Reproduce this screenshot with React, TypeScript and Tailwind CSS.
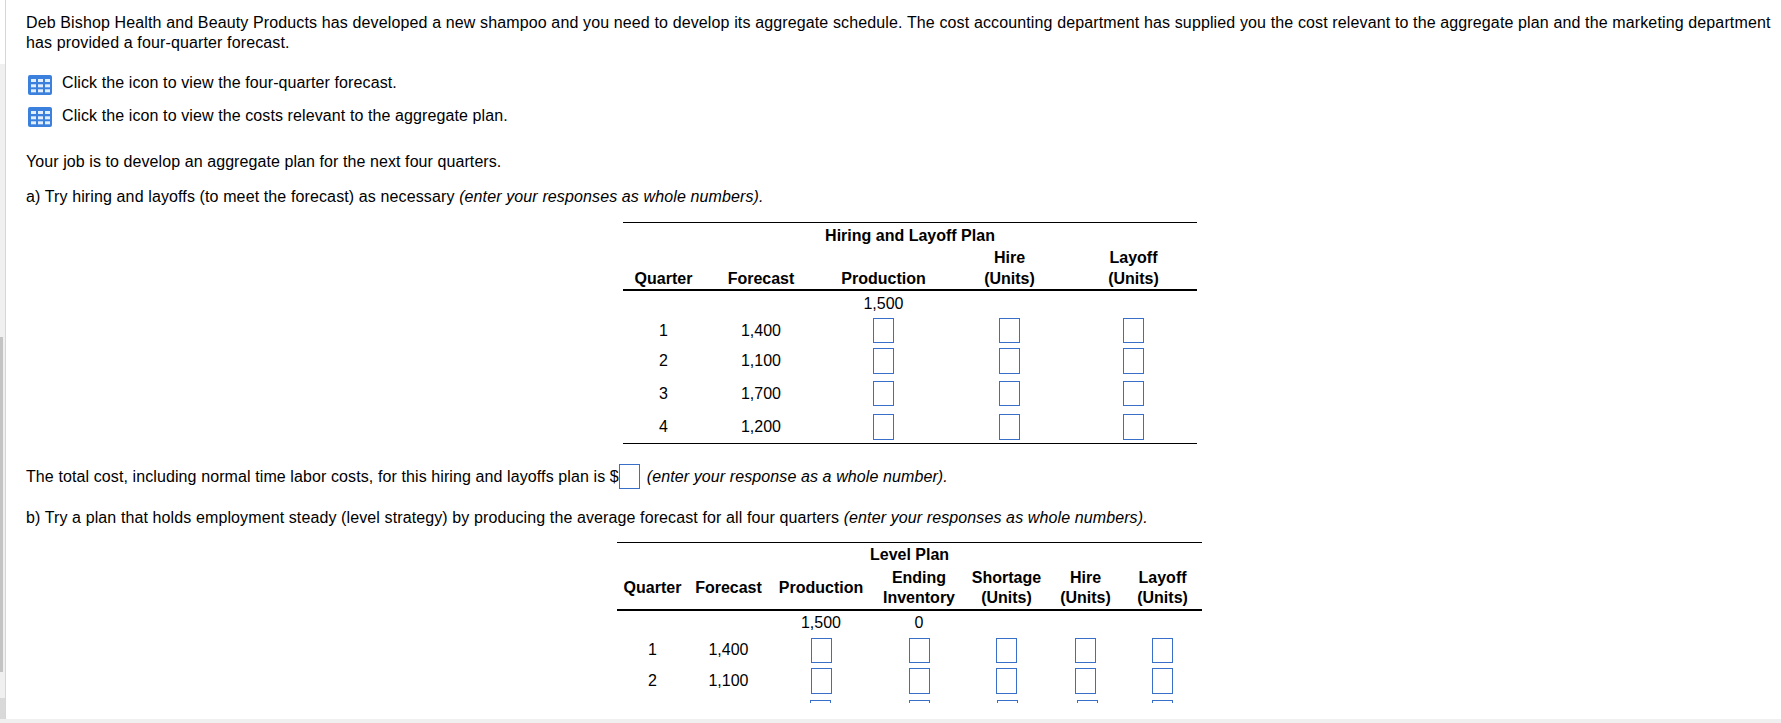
import React from "react";

const Icon = ({ className }: { className: string }) => (
  <svg width="24" height="20" viewBox="0 0 24 20" className={"shrink-0 " + className}>
    <rect x="0" y="0" width="24" height="20" rx="2" fill="#3a80dc" />
    <g fill="#e3eefc">
      {[4, 9.3, 14.3].map((y) =>
        [3, 10, 17].map((x) => <rect key={x + "-" + y} x={x} y={y} width={5} height={3} />)
      )}
    </g>
  </svg>
);

const Box = ({ tall, className = "" }: { tall?: boolean; className?: string }) => (
  <span className={(tall ? "h-[26px] " : "h-[25px] ") + "inline-block w-[21px] border border-[#3a6fc9] bg-white align-middle " + className} />
);

const rows1: [string, string, string, boolean][] = [
  ["1", "1,400", "h-[28px]", false],
  ["2", "1,100", "h-[33px]", true],
  ["3", "1,700", "h-[33px]", false],
  ["4", "1,200", "h-[34px]", true],
];

export default function App() {
  return (
    <div className="h-[723px] w-[1781px] overflow-hidden bg-white text-[16px] leading-[20px] text-black flex flex-col" style={{ fontFamily: '"Liberation Sans", Arial, sans-serif' }}>
      <div className="flex flex-1 min-h-0">
        <div className="w-[6px] shrink-0 border-r border-[#d3d6e2] flex flex-col">
          <div className="h-[64px] bg-white" />
          <div className="h-[273px] bg-[#f0f0f0]" />
          <div className="h-[335px] bg-[#f0f0f0]"><div className="h-full w-[3px] bg-[#c4c4c4]" /></div>
          <div className="h-[26px] bg-[#f0f0f0]" />
          <div className="flex-1 bg-[#d9d9d9]" />
        </div>
        <div className="flex-1 min-w-0 flex flex-col">
          <div className="h-[703px] shrink-0 overflow-hidden pl-[20px] pt-[13px]">
            <p className="tracking-[0.13px]">Deb Bishop Health and Beauty Products has developed a new shampoo and you need to develop its aggregate schedule. The cost accounting department has supplied you the cost relevant to the aggregate plan and the marketing department has provided a four-quarter forecast.</p>
            <div className="mt-[20px] flex items-start gap-[10px] pl-[2px] h-[23px] tracking-[0.1px]"><Icon className="mt-[2px]" /><span>Click the icon to view the four-quarter forecast.</span></div>
            <div className="mt-[10px] flex items-start gap-[10px] pl-[2px] h-[22px] tracking-[0.1px]"><Icon className="mt-[1px]" /><span>Click the icon to view the costs relevant to the aggregate plan.</span></div>
            <p className="mt-[24px] tracking-[0.08px]">Your job is to develop an aggregate plan for the next four quarters.</p>
            <p className="mt-[15px] tracking-[0.12px]">a) Try hiring and layoffs (to meet the forecast) as necessary <em>(enter your responses as whole numbers).</em></p>

            <table className="mt-[15px] ml-[597px] w-[574px] table-fixed border-separate border-spacing-0 text-center leading-[21px]">
              <colgroup>
                <col className="w-[81px]" /><col className="w-[114px]" /><col className="w-[131px]" /><col className="w-[121px]" /><col className="w-[127px]" />
              </colgroup>
              <thead className="font-bold">
                <tr><th colSpan={5} className="h-[25px] border-t border-black p-0">Hiring and Layoff Plan</th></tr>
                <tr className="align-bottom">
                  {["Quarter", "Forecast", "Production"].map((t) => <th key={t} className="border-b-2 border-black p-0">{t}</th>)}
                  <th className="border-b-2 border-black p-0">Hire<br />(Units)</th>
                  <th className="border-b-2 border-black p-0">Layoff<br />(Units)</th>
                </tr>
              </thead>
              <tbody>
                <tr className="h-[25px]"><td /><td /><td>1,500</td><td /><td /></tr>
                {rows1.map(([q, f, h, tall], i) => (
                  <tr key={q} className={h}>
                    {[q, f].map((t, j) => <td key={j} className={i === 3 ? "border-b border-black" : ""}>{t}</td>)}
                    {[0, 1, 2].map((j) => <td key={j} className={i === 3 ? "border-b border-black" : ""}><Box tall={tall} /></td>)}
                  </tr>
                ))}
              </tbody>
            </table>

            <div className="mt-[20px] flex items-center h-[25px] tracking-[0.1px]">
              <span>The total cost, including normal time labor costs, for this hiring and layoffs plan is $</span>
              <Box className="mr-[7px] shrink-0" />
              <em>(enter your response as a whole number).</em>
            </div>
            <p className="mt-[19px] tracking-[0.11px]">b) Try a plan that holds employment steady (level strategy) by producing the average forecast for all four quarters <em>(enter your responses as whole numbers).</em></p>

            <table className="mt-[14px] ml-[591px] w-[585px] table-fixed border-separate border-spacing-0 text-center leading-[20px]">
              <colgroup>
                <col className="w-[71px]" /><col className="w-[81px]" /><col className="w-[104px]" /><col className="w-[92px]" /><col className="w-[83px]" /><col className="w-[75px]" /><col className="w-[79px]" />
              </colgroup>
              <thead className="font-bold">
                <tr><th colSpan={7} className="h-[25px] border-t border-black p-0">Level Plan</th></tr>
                <tr className="h-[44px]">
                  <th className="border-b-2 border-black p-0">Quarter</th>
                  <th className="border-b-2 border-black p-0">Forecast</th>
                  <th className="border-b-2 border-black p-0">Production</th>
                  <th className="border-b-2 border-black p-0">Ending<br />Inventory</th>
                  <th className="border-b-2 border-black p-0">Shortage<br />(Units)</th>
                  <th className="border-b-2 border-black p-0">Hire<br />(Units)</th>
                  <th className="border-b-2 border-black p-0">Layoff<br />(Units)</th>
                </tr>
              </thead>
              <tbody>
                <tr className="h-[24px]"><td /><td /><td>1,500</td><td>0</td><td /><td /><td /></tr>
                <tr className="h-[30px]"><td>1</td><td>1,400</td><td><Box /></td><td><Box /></td><td><Box /></td><td><Box /></td><td><Box /></td></tr>
                <tr className="h-[31px]"><td>2</td><td>1,100</td><td><Box tall /></td><td><Box tall /></td><td><Box tall /></td><td><Box tall /></td><td><Box tall /></td></tr>
                <tr className="h-[34px]"><td /><td /><td><Box tall className="mr-[2px]" /></td><td><Box tall /></td><td><Box tall className="ml-[2px]" /></td><td><Box tall className="ml-[4px]" /></td><td><Box tall /></td></tr>
              </tbody>
            </table>
          </div>
          <div className="flex-1 bg-white" />
        </div>
      </div>
      <div className="h-[4px] shrink-0 bg-[#f0f0f0]" />
    </div>
  );
}
